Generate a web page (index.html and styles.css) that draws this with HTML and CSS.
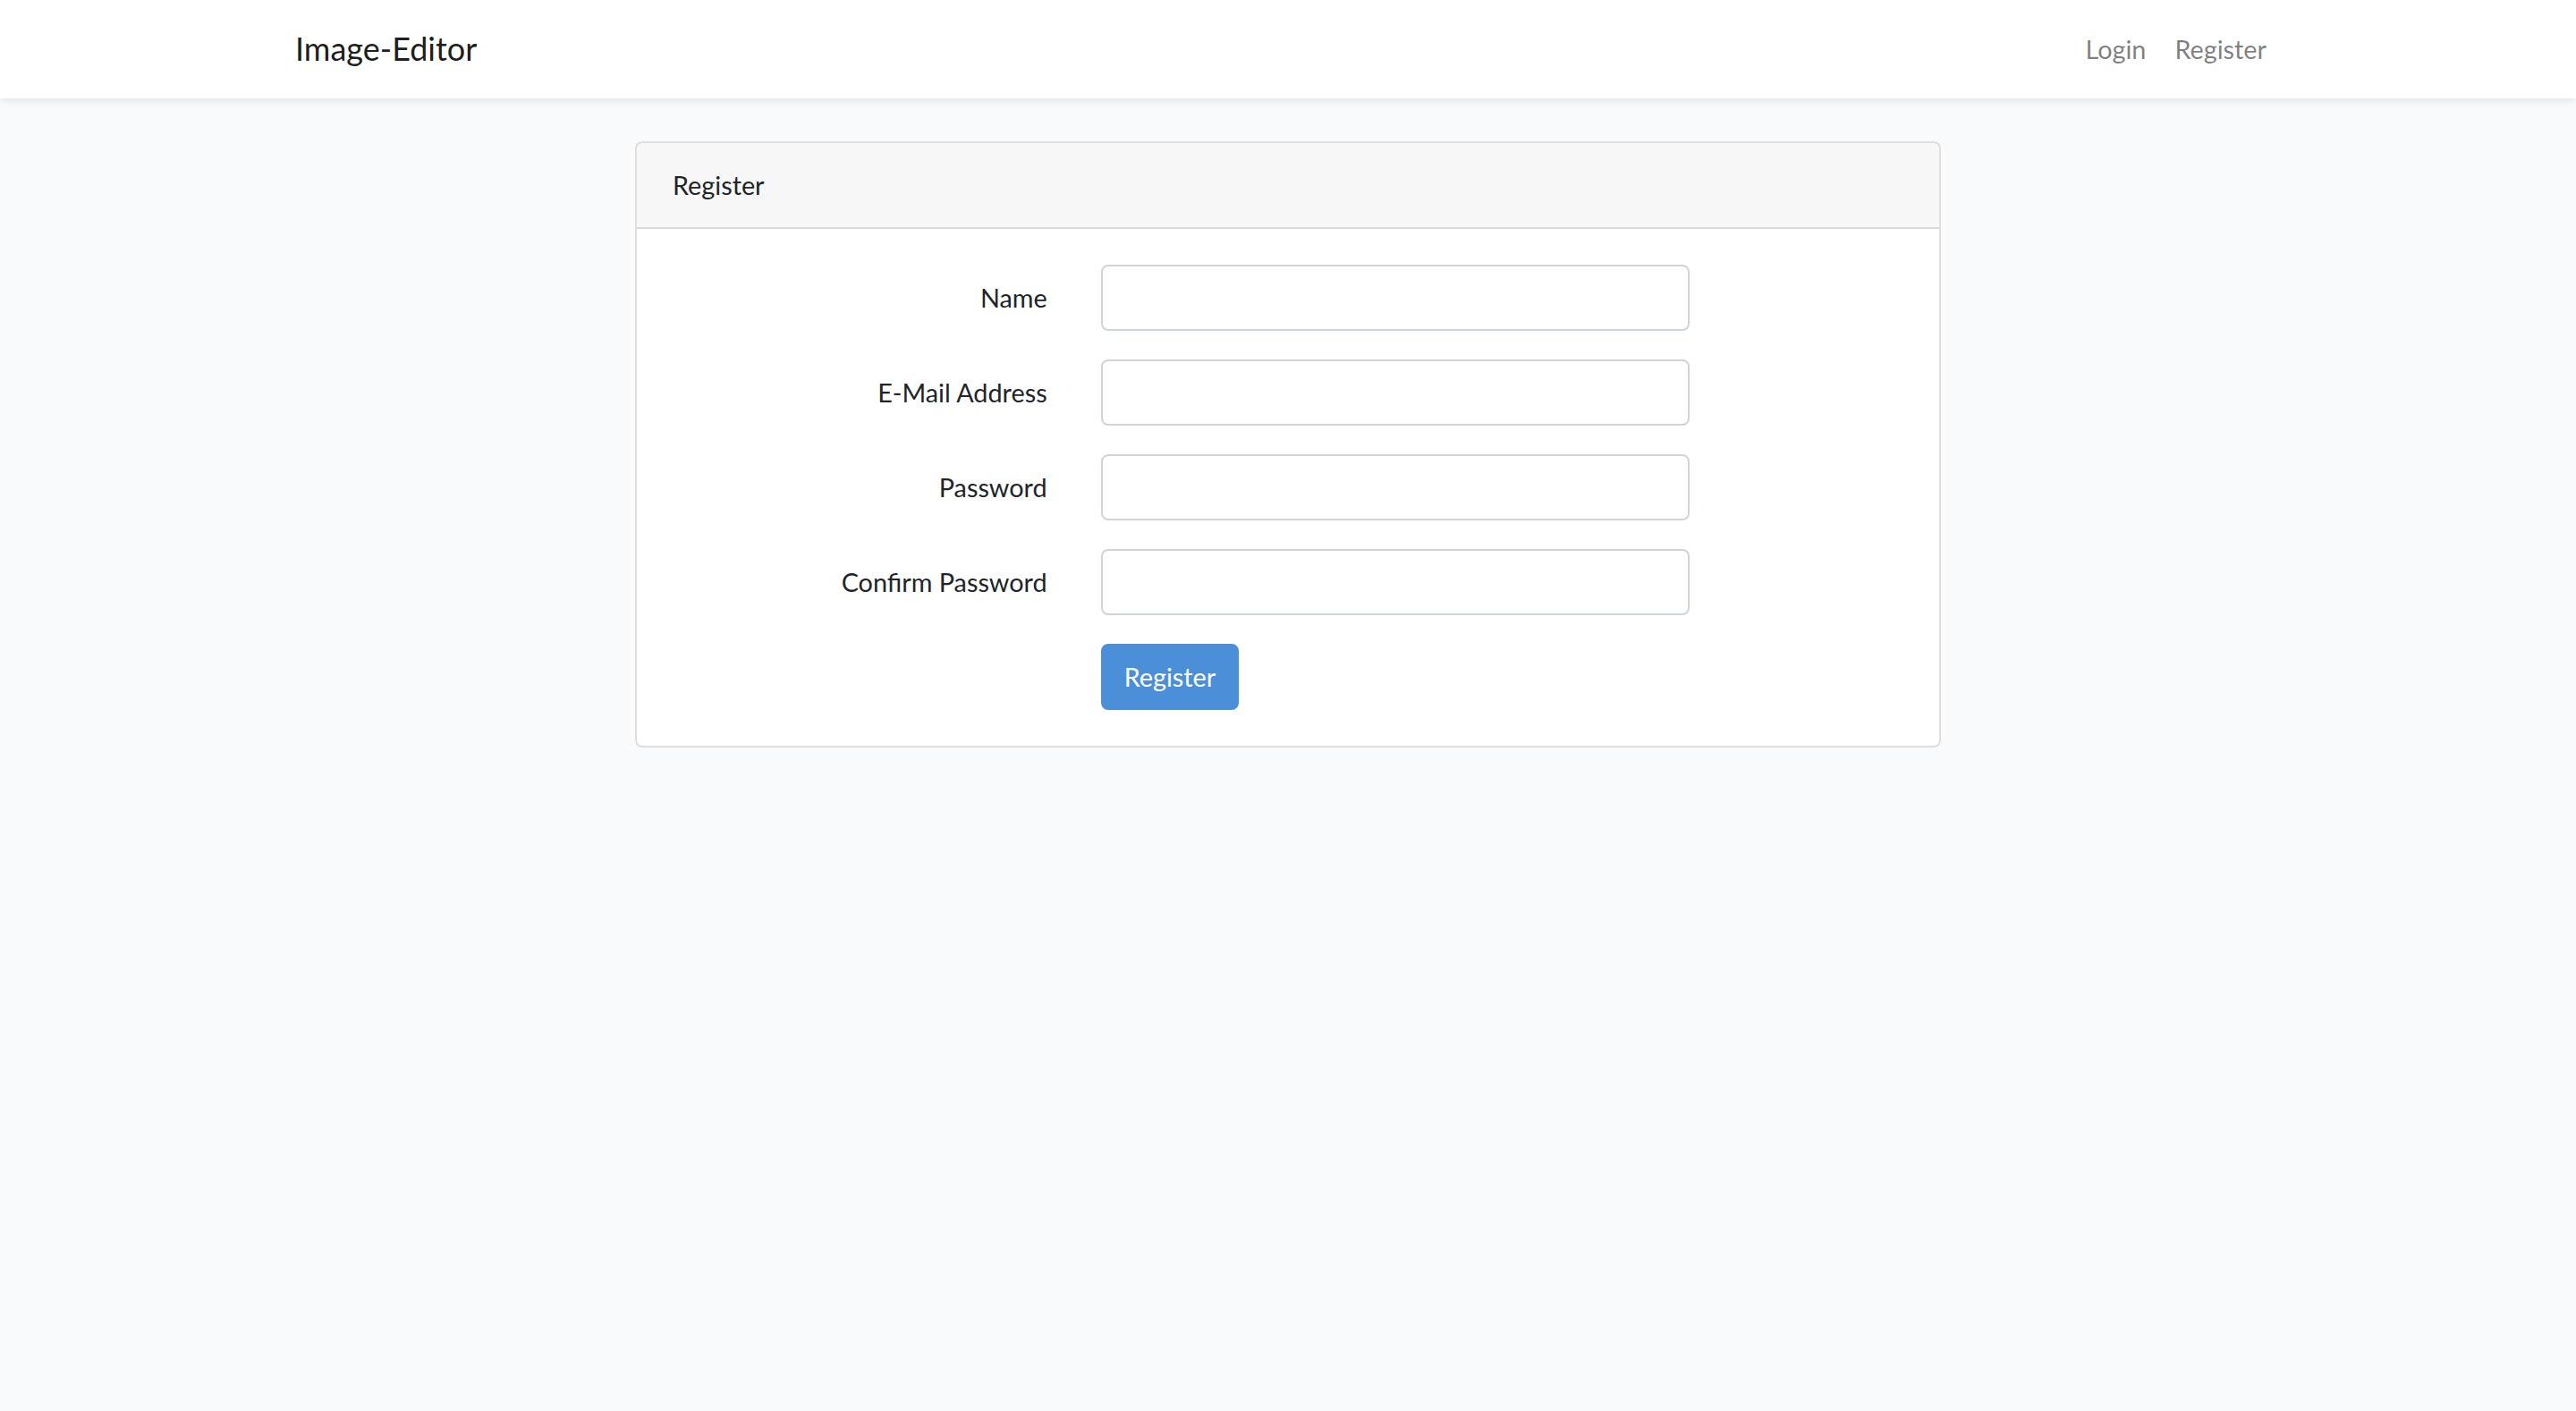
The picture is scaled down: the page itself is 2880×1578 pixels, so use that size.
FILE: index.html
```html
<!DOCTYPE html>
<html lang="en">
<head>
    <meta charset="UTF-8">
    <title>Image-Editor</title>
    <link rel="stylesheet" href="styles.css">
</head>
<body>
<div id="app">
    <nav class="navbar">
        <div class="container nav-inner">
            <a class="brand" href="#">Image-Editor</a>
            <ul class="nav-links">
                <li><a href="#">Login</a></li>
                <li><a href="#">Register</a></li>
            </ul>
        </div>
    </nav>

    <main class="main">
        <div class="container">
            <div class="card">
                <div class="card-header">Register</div>
                <div class="card-body">
                    <form>
                        <div class="form-row">
                            <label for="name">Name</label>
                            <input id="name" type="text" class="form-control">
                        </div>
                        <div class="form-row">
                            <label for="email">E-Mail Address</label>
                            <input id="email" type="email" class="form-control">
                        </div>
                        <div class="form-row">
                            <label for="password">Password</label>
                            <input id="password" type="password" class="form-control">
                        </div>
                        <div class="form-row">
                            <label for="password-confirm">Confirm Password</label>
                            <input id="password-confirm" type="password" class="form-control">
                        </div>
                        <div class="form-row last">
                            <span></span>
                            <div><button type="submit" class="btn">Register</button></div>
                        </div>
                    </form>
                </div>
            </div>
        </div>
    </main>
</div>
</body>
</html>
```

FILE: styles.css
```css
* {
    margin: 0;
    padding: 0;
    box-sizing: border-box;
}

ul {
    list-style: none
}

a {
    text-decoration: none
}

body {
    background-color: #f8fafc;
    font-family: Lato, "Noto Sans", sans-serif;
    font-size: 28.8px;
    line-height: 1.6;
    color: #212529;
}

.container {
    max-width: 2280px;
    margin: 0 auto;
    padding: 0 30px;
}

/* 顶部导航 */
.navbar {
    background-color: #fff;
    padding: 16px 0;
    box-shadow: 0 4px 8px rgba(0, 0, 0, .075);
}

.nav-inner {
    display: flex;
    align-items: center;
    justify-content: space-between;
}

.brand {
    font-size: 36px;
    line-height: 1.6;
    padding: 10.24px 0;
    color: rgba(0, 0, 0, .9);
}

.nav-links {
    display: flex;
}

.nav-links a {
    display: block;
    padding: 16px 16px;
    color: rgba(0, 0, 0, .5);
}

/* 注册卡片 */
.main {
    padding: 48px 0;
}

.card {
    width: 1460px;
    margin: 0 auto;
    background-color: #fff;
    border: 2px solid rgba(0, 0, 0, .125);
    border-radius: 8px;
}

.card-header {
    padding: 24px 40px;
    background-color: rgba(0, 0, 0, .03);
    border-bottom: 2px solid rgba(0, 0, 0, .125);
    border-radius: 6px 6px 0 0;
}

.card-body {
    padding: 40px;
}

.form-row {
    display: grid;
    grid-template-columns: 418.67px 658px;
    column-gap: 60px;
    margin-bottom: 32px;
}

.form-row.last {
    margin-bottom: 0;
}

.form-row label {
    text-align: right;
    padding: 14px 0;
}

.form-control {
    display: block;
    width: 100%;
    height: 74px;
    padding: 12px 24px;
    font: inherit;
    color: #495057;
    background-color: #fff;
    border: 2px solid #ced4da;
    border-radius: 8px;
}

.btn {
    font: inherit;
    color: #fff;
    background-color: #4c8fd9;
    border: 2px solid #4c8fd9;
    border-radius: 8px;
    padding: 12px 24px;
    cursor: pointer;
}
```
